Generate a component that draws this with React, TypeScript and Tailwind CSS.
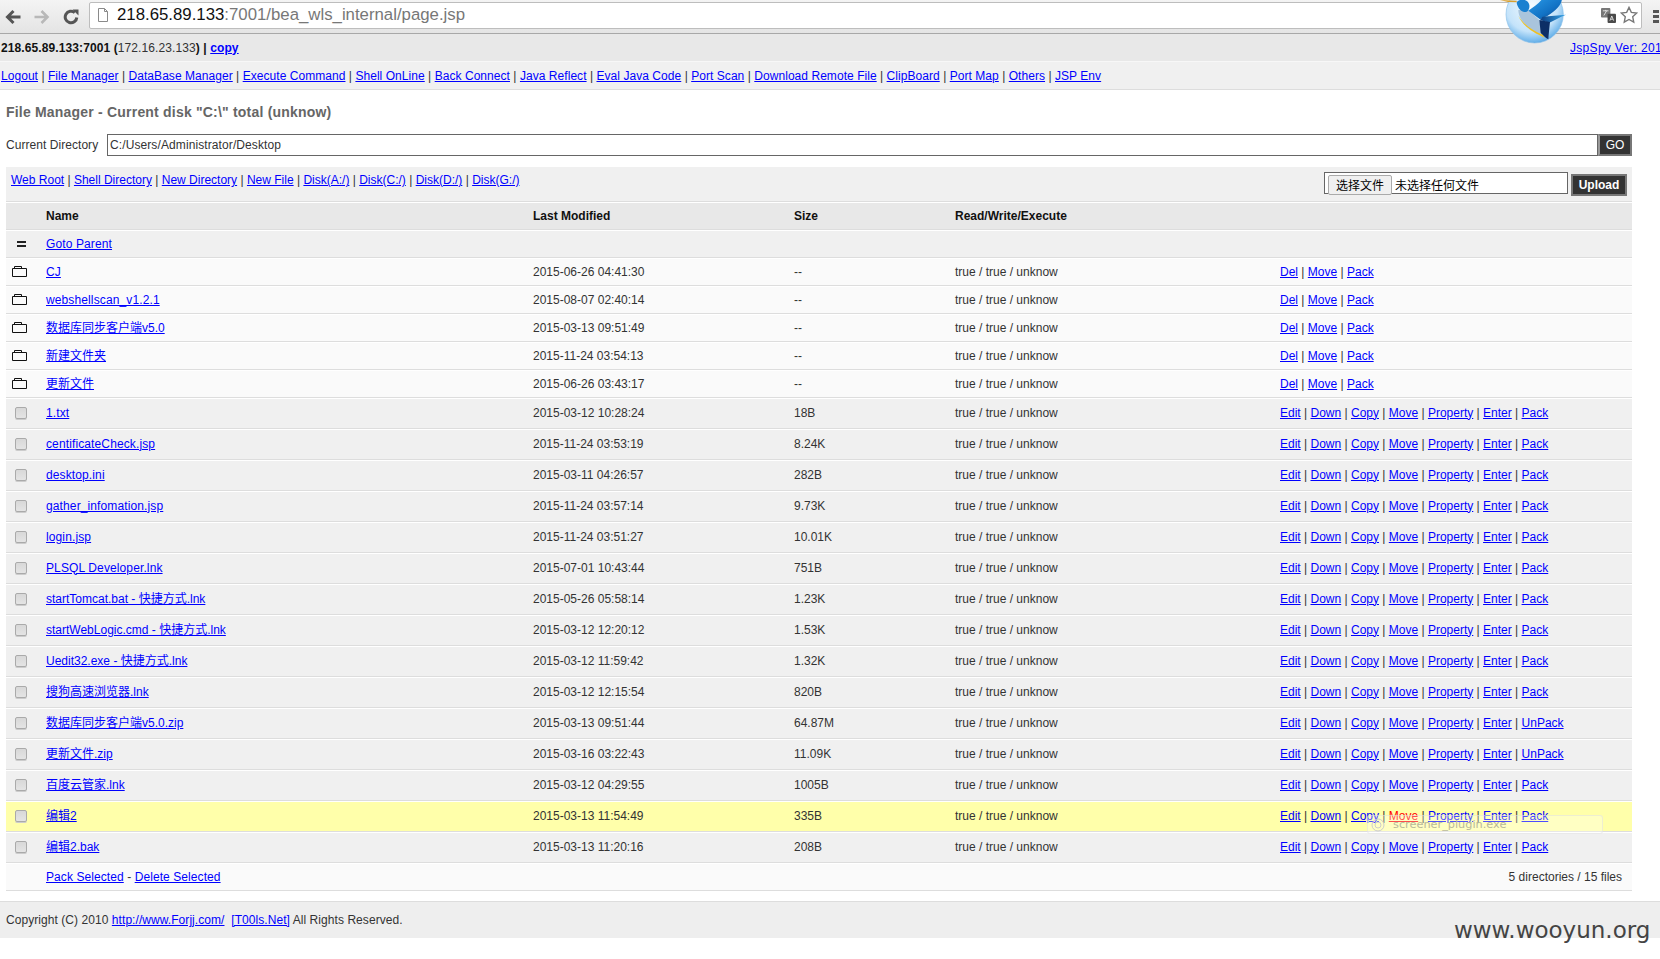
const FONT = "font-['Liberation_Sans','Noto_Sans_CJK_SC',sans-serif]";

function A({ children, className = "" }: { children: React.ReactNode; className?: string }) {
  return <a href="#" className={`text-[#0000ff] underline ${className}`}>{children}</a>;
}

function Links({ items, hot }: { items: string[]; hot?: string }) {
  return (
    <>
      {items.map((t, i) => (
        <span key={t}>
          {i > 0 && " | "}
          <A className={t === hot ? "text-[#ff0000]" : ""}>{t}</A>
        </span>
      ))}
    </>
  );
}

function Bird() {
  return (
    <svg viewBox="0 0 210 135" className="absolute left-[1500px] top-0 w-[70px] h-[45px]">
      <defs>
        <radialGradient id="disc" cx="0.45" cy="0.35" r="0.7">
          <stop offset="0" stopColor="#f4fbff" />
          <stop offset="0.65" stopColor="#c4e3fa" />
          <stop offset="0.9" stopColor="#6db4ea" />
          <stop offset="1" stopColor="#2f86d2" />
        </radialGradient>
        <linearGradient id="wing" x1="0" y1="0" x2="1" y2="1">
          <stop offset="0" stopColor="#2a9be8" />
          <stop offset="0.6" stopColor="#1272c4" />
          <stop offset="1" stopColor="#0a3f86" />
        </linearGradient>
        <linearGradient id="tail" x1="0" y1="0" x2="1" y2="0">
          <stop offset="0" stopColor="#0b3d80" />
          <stop offset="1" stopColor="#35a6ea" />
        </linearGradient>
      </defs>
      <circle cx="104" cy="43" r="86" fill="url(#disc)" stroke="#8fc2ea" strokeWidth="2" />
      <path d="M0 0 L50 2 L50 7 L24 6 Z" fill="#d8a030" />
      <path d="M55 30 C55 60 85 90 125 105 L118 60 L85 30 Z" fill="#a9c4dc" />
      <path d="M85 32 C100 22 118 10 128 -5 L186 -5 C186 12 170 30 142 48 L120 58 Z" fill="url(#wing)" />
      <path d="M128 50 L198 44 C178 52 162 62 148 68 L120 60 Z" fill="url(#tail)" />
      <path d="M118 60 L150 66 C148 84 146 102 145 118 C136 112 128 106 122 98 Z" fill="#0c2f66" />
      <path d="M50 8 C55 -5 85 -5 88 15 C90 30 80 40 70 35 C60 32 52 20 50 8 Z" fill="#1a80d0" />
      <path d="M55 48 C72 82 100 98 134 113 L128 104 C100 92 75 78 55 48 Z" fill="#f0c020" />
    </svg>
  );
}

function BrowserBar() {
  return (
    <div className="h-[34px] flex items-center bg-gradient-to-b from-[#f4f4f4] to-[#e4e4e4] border-b border-b-[#a8a8a8]">
      <svg viewBox="0 0 16 16" className="ml-[5px] w-[16px] h-[16px]" fill="none" stroke="#555" strokeWidth="3">
        <path d="M15.500 8H3M8.500 2 2.500 8 8.500 14" />
      </svg>
      <svg viewBox="0 0 16 16" className="ml-[13px] w-[16px] h-[16px]" fill="none" stroke="#b8b8b8" strokeWidth="2.600">
        <path d="M.5 8H13M7.500 2 13.500 8 7.500 14" />
      </svg>
      <svg viewBox="0 0 16 16" className="ml-[13px] w-[16px] h-[16px]" fill="none" stroke="#555" strokeWidth="3">
        <path d="M13.800 8.500A5.800 5.800 0 1 1 11.800 3.600" />
        <path d="M9.500 .5h6v6z" fill="#555" stroke="none" />
      </svg>
      <div className="ml-[10px] w-[1553px] h-[27px] -mt-[3px] bg-white border border-[#bdbdbd] rounded-[2px] flex items-center">
        <svg viewBox="0 0 12 14" className="ml-[7px] w-[12px] h-[14px]" fill="#fff" stroke="#8a8a8a">
          <path d="M1.500.5h6l3 3v10h-9zM7.500.5v3h3" />
        </svg>
        <span className="ml-[8px] pt-[1px] text-[16.800px] leading-none font-['Liberation_Sans',sans-serif] text-[#777]">
          <span className="text-[#111]">218.65.89.133</span>:7001/bea_wls_internal/page.jsp
        </span>
        <div className="ml-auto mr-[3px] flex items-center gap-[4px]">
          <svg viewBox="0 0 16 16" className="w-[15px] h-[15px]">
            <rect x="0" y="0" width="10" height="10" rx="1" fill="#777" />
            <rect x="7" y="6" width="9" height="10" rx="1" fill="#4a4a4a" />
            <path d="M2 3h6M5 2v1M3 8l3-5" stroke="#fff" strokeWidth="0.8" fill="none" />
            <path d="M9.500 13.500l2-5 2 5M10.500 12h2" stroke="#fff" strokeWidth="0.8" fill="none" />
          </svg>
          <svg viewBox="0 0 20 20" className="w-[18px] h-[18px]" fill="#fff" stroke="#777" strokeWidth="1.500">
            <path d="M10 1.500l2.600 5.600 6 .7-4.500 4.100 1.200 6L10 15l-5.300 2.900 1.200-6L1.400 7.800l6-.7z" />
          </svg>
        </div>
      </div>
      <div className="ml-[11px] flex flex-col gap-[2px] -mt-[1px]">
        <span className="w-[6px] h-[3px] bg-[#555]" />
        <span className="w-[6px] h-[3px] bg-[#555]" />
        <span className="w-[6px] h-[3px] bg-[#555]" />
      </div>
    </div>
  );
}

const NAV = ["Logout", "File Manager", "DataBase Manager", "Execute Command", "Shell OnLine", "Back Connect", "Java Reflect", "Eval Java Code", "Port Scan", "Download Remote File", "ClipBoard", "Port Map", "Others", "JSP Env"];
const TOOLS = ["Web Root", "Shell Directory", "New Directory", "New File", "Disk(A:/)", "Disk(C:/)", "Disk(D:/)", "Disk(G:/)"];
const DIR_OPS = ["Del", "Move", "Pack"];
const FILE_OPS = ["Edit", "Down", "Copy", "Move", "Property", "Enter", "Pack"];
const ZIP_OPS = ["Edit", "Down", "Copy", "Move", "Property", "Enter", "UnPack"];

const DIRS: [string, string][] = [
  ["CJ", "2015-06-26 04:41:30"],
  ["webshellscan_v1.2.1", "2015-08-07 02:40:14"],
  ["数据库同步客户端v5.0", "2015-03-13 09:51:49"],
  ["新建文件夹", "2015-11-24 03:54:13"],
  ["更新文件", "2015-06-26 03:43:17"],
];

const FILES: [string, string, string][] = [
  ["1.txt", "2015-03-12 10:28:24", "18B"],
  ["centificateCheck.jsp", "2015-11-24 03:53:19", "8.24K"],
  ["desktop.ini", "2015-03-11 04:26:57", "282B"],
  ["gather_infomation.jsp", "2015-11-24 03:57:14", "9.73K"],
  ["login.jsp", "2015-11-24 03:51:27", "10.01K"],
  ["PLSQL Developer.lnk", "2015-07-01 10:43:44", "751B"],
  ["startTomcat.bat - 快捷方式.lnk", "2015-05-26 05:58:14", "1.23K"],
  ["startWebLogic.cmd - 快捷方式.lnk", "2015-03-12 12:20:12", "1.53K"],
  ["Uedit32.exe - 快捷方式.lnk", "2015-03-12 11:59:42", "1.32K"],
  ["搜狗高速浏览器.lnk", "2015-03-12 12:15:54", "820B"],
  ["数据库同步客户端v5.0.zip", "2015-03-13 09:51:44", "64.87M"],
  ["更新文件.zip", "2015-03-16 03:22:43", "11.09K"],
  ["百度云管家.lnk", "2015-03-12 04:29:55", "1005B"],
  ["编辑2", "2015-03-13 11:54:49", "335B"],
  ["编辑2.bak", "2015-03-13 11:20:16", "208B"],
];

const ROW = "grid grid-cols-[40px_487px_261px_161px_325px_1fr] items-center border-t border-t-white border-b border-b-[#dddddd]";

const nameClass = (n: string) => (/^[\x00-\x7f]+$/.test(n) ? "justify-self-start tracking-[0.12px]" : "justify-self-start");

function Folder() {
  return (
    <svg viewBox="0 0 15 11" className="ml-[6px] mb-[2px] w-[15px] h-[11px]" fill="none" stroke="#111" strokeWidth="1">
      <path d="M.5 2.500h14v8H.5zM2.500 2.500V.5h7v2" />
    </svg>
  );
}

function Check() {
  return (
    <input
      type="checkbox"
      aria-label="select"
      className="ml-[9px] block appearance-none w-[12px] h-[12px] rounded-[2px] border border-[#aaaaaa] bg-gradient-to-b from-[#d8d8d8] to-[#e4e4e4] shadow-[0_1px_0_#cccccc]"
    />
  );
}

function Shot() {
  return (
    <div className="absolute left-[1367px] top-[815px] w-[236px] h-[19px] rounded-[3px] border border-[#dddddd]/50 bg-white/30 flex items-center pl-[3px] pt-[1px]">
      <svg viewBox="0 0 14 14" className="w-[14px] h-[14px]" fill="none" stroke="#ccc" strokeWidth="1">
        <circle cx="7" cy="7" r="6" />
        <circle cx="7" cy="7" r="3" />
      </svg>
      <span className="ml-[8px] text-[11.300px] leading-none text-[#b8b89a] font-['DejaVu_Sans',sans-serif]">screener_plugin.exe</span>
    </div>
  );
}

export default function App() {
  return (
    <div className={`relative min-h-[959px] overflow-hidden bg-white text-[12px] leading-[14px] text-[#333] ${FONT}`}>
      <BrowserBar />
      <div className="h-[28px] flex items-center justify-between bg-[#e8e8e8] border-b border-b-[#f7f7f7] pl-[1px] tracking-[0.1px]">
        <div>
          <b className="text-[#111]">218.65.89.133:7001 (</b>172.16.23.133<b className="text-[#111]">) | </b>
          <A className="font-bold">copy</A>
        </div>
        <A className="whitespace-nowrap w-[90px] overflow-hidden shrink-0 ml-auto tracking-[0.3px]">JspSpy Ver: 2010</A>
      </div>
      <div className="h-[28px] flex items-center bg-[#f0f0f0] border-b border-b-[#dddddd] pl-[1px] tracking-[0.05px]">
        <div><Links items={NAV} /></div>
      </div>
      <h2 className="h-[44px] pl-[6px] pt-[14px] text-[14px] leading-[16px] tracking-[0.2px] font-bold text-[#666]">
        File Manager - Current disk "C:\" total (unknow)
      </h2>
      <div className="ml-[6px] w-[1626px] h-[22px] flex items-center">
        <span className="w-[101px] shrink-0 tracking-[0.05px]">Current Directory</span>
        <div className="flex-1 h-[22px] flex items-center bg-white border border-[#666] pl-[2px] tracking-[0.1px]">C:/Users/Administrator/Desktop</div>
        <button className="w-[34px] h-[22px] shrink-0 bg-[#333] text-white border-2 border-[#777] border-l-[#999]">GO</button>
      </div>
      <div className="ml-[6px] w-[1626px] mt-[11px]">
        <div className="h-[35px] flex items-start bg-[#f0f0f0] border-b border-b-[#dddddd] pl-[5px] pr-[5px]">
          <div className="mt-[6px]"><Links items={TOOLS} /></div>
          <div className="ml-auto mt-[5px] flex items-start">
            <div className="w-[244px] h-[22px] bg-white border border-[#666] flex items-start pl-[3px] pt-[2px] text-[12px] text-black">
              <span className="w-[64px] h-[20px] pt-[1px] bg-[#f0f0f0] border border-[#aaaaaa] rounded-[2px] flex items-center justify-center">选择文件</span>
              <span className="ml-[3px] pt-[1px] leading-[20px]">未选择任何文件</span>
            </div>
            <button className="ml-[3px] mt-[2px] w-[56px] h-[22px] bg-[#333] text-white font-bold border-2 border-[#777]">Upload</button>
          </div>
        </div>
        <div className={`${ROW} h-[28px] bg-[#e8e8e8] font-bold text-[#111]`}>
          <span /><span>Name</span><span>Last Modified</span><span>Size</span><span>Read/Write/Execute</span><span />
        </div>
        <div className={`${ROW} h-[28px] bg-[#f0f0f0]`}>
          <span className="ml-[11px] w-[9px] h-[6px] border-y-2 border-y-[#222]" />
          <A className={nameClass("Goto Parent")}>Goto Parent</A>
        </div>
        {DIRS.map(([name, date]) => (
          <div key={name} className={`${ROW} h-[28px] bg-[#fafafa]`}>
            <Folder />
            <A className={nameClass(name)}>{name}</A>
            <span>{date}</span>
            <span>--</span>
            <span>true / true / unknow</span>
            <div><Links items={DIR_OPS} /></div>
          </div>
        ))}
        {FILES.map(([name, date, size]) => {
          const hot = name === "编辑2";
          return (
            <div key={name} className={`${ROW} h-[31px] pb-[2px] ${hot ? "bg-[#ffffaa]" : "bg-[#f0f0f0]"}`}>
              <Check />
              <A className={nameClass(name)}>{name}</A>
              <span>{date}</span>
              <span>{size}</span>
              <span>true / true / unknow</span>
              <div><Links items={name.endsWith(".zip") ? ZIP_OPS : FILE_OPS} hot={hot ? "Move" : undefined} /></div>
            </div>
          );
        })}
        <div className="h-[28px] flex items-center justify-between bg-[#fafafa] border-t border-t-white border-b border-b-[#dddddd] pl-[40px] pr-[10px]">
          <div className="tracking-[0.08px]"><A>Pack Selected</A> - <A>Delete Selected</A></div>
          <span>5 directories / 15 files</span>
        </div>
      </div>
      <div className="mt-[10px] h-[37px] flex items-center bg-[#eeeeee] border-t border-t-[#dddddd] pl-[6px] tracking-[0.06px]">
        <div>
          Copyright (C) 2010 <A>http://www.Forjj.com/</A>&nbsp;&nbsp;<A>[T00ls.Net]</A> All Rights Reserved.
        </div>
      </div>
      <Bird />
      <Shot />
      <span className="absolute left-[1454px] top-[915px] text-[23px] leading-[30px] text-[#444] font-['DejaVu_Sans',sans-serif]">www.wooyun.org</span>
    </div>
  );
}
